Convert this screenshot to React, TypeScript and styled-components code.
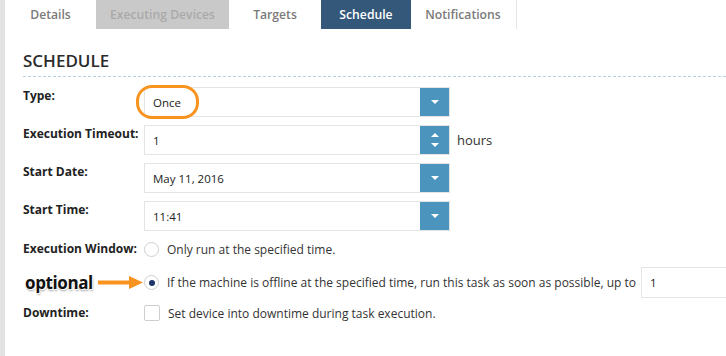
import React from "react";
import styled, { createGlobalStyle } from "styled-components";

const GlobalStyle = createGlobalStyle`
  html, body {
    margin: 0;
    padding: 0;
    background: #ffffff;
  }
  body {
    font-family: "Open Sans", "Liberation Sans", sans-serif;
    color: #333;
  }
`;

const Page = styled.div`
  display: flex;
  width: 726px;
  height: 356px;
  overflow: hidden;
`;

const Edge = styled.div`
  width: 5px;
  flex-shrink: 0;
  background: #e2e2e2;
`;

const Main = styled.div`
  flex: 1;
  min-width: 0;
`;

const TabBar = styled.div`
  display: flex;
  height: 29px;
  margin-left: 7px;
`;

const Tab = styled.div<{ w: number; variant?: "active" | "disabled"; last?: boolean; shift?: number }>`
  display: flex;
  align-items: center;
  justify-content: center;
  width: ${(p) => p.w}px;
  box-sizing: border-box;
  padding-right: ${(p) => p.shift ?? 0}px;
  margin-right: 1px;
  font-size: 12.2px;
  font-weight: 600;
  color: ${(p) =>
    p.variant === "active" ? "#fff" : p.variant === "disabled" ? "#a9a9a9" : "#7a7a7a"};
  background: ${(p) =>
    p.variant === "active" ? "#34587a" : p.variant === "disabled" ? "#c9c9c9" : "#fff"};
  border-right: ${(p) => (p.last ? "1px solid #e6e6e6" : "none")};
`;

const Section = styled.div`
  padding: 21px 0 0 18px;
`;

const Heading = styled.h2`
  margin: 0;
  font-size: 17px;
  font-weight: 600;
  color: #2b2b2b;
  line-height: 22px;
  padding-bottom: 4px;
  border-bottom: 1px dashed #b5d2e2;
`;

const Form = styled.div`
  display: grid;
  grid-template-columns: 121px 1fr;
  margin-top: 10px;
`;

const Label = styled.div<{ pad?: number }>`
  font-size: 12px;
  line-height: 16px;
  font-weight: 700;
  color: #222;
  padding-top: ${(p) => p.pad ?? 1}px;
  white-space: nowrap;
`;

const Control = styled.div<{ gap?: number; h?: number }>`
  display: flex;
  align-items: center;
  margin-bottom: ${(p) => p.gap ?? 8}px;
  ${(p) => (p.h ? `height: ${p.h}px;` : "")}
  position: relative;
`;

const Field = styled.div`
  display: flex;
  width: 306px;
  height: 30px;
  box-sizing: border-box;
  border: 1px solid #e4e4e4;
  background: #fff;
`;

const FieldText = styled.div`
  flex: 1;
  display: flex;
  align-items: center;
  padding-left: 8px;
  font-size: 11.5px;
  color: #222;
`;

const Btn = styled.div`
  width: 29px;
  background: #4b94bd;
  display: flex;
  flex-direction: column;
  align-items: center;
  justify-content: center;
  gap: 6px;
`;

const Caret = styled.div<{ up?: boolean }>`
  width: 0;
  height: 0;
  border-left: 4px solid transparent;
  border-right: 4px solid transparent;
  ${(p) => (p.up ? "border-bottom: 4px solid #fff;" : "border-top: 4px solid #fff;")}
`;

const Unit = styled.span`
  margin-left: 7px;
  font-size: 13px;
  color: #333;
`;

const Highlight = styled.div`
  position: absolute;
  left: -8px;
  top: -2px;
  width: 57px;
  height: 28px;
  border: 3px solid #f7931e;
  border-radius: 16px;
  pointer-events: none;
`;

const Radio = styled.div<{ checked?: boolean }>`
  width: 15px;
  height: 15px;
  box-sizing: border-box;
  border: 1px solid #cfcfcf;
  border-radius: 50%;
  display: flex;
  align-items: center;
  justify-content: center;
  flex-shrink: 0;
  &::after {
    content: "";
    display: ${(p) => (p.checked ? "block" : "none")};
    width: 6px;
    height: 6px;
    border-radius: 50%;
    background: #1d3467;
  }
`;

const Box = styled.div`
  width: 16px;
  height: 16px;
  box-sizing: border-box;
  border: 1px solid #cfcfcf;
  border-radius: 2px;
  flex-shrink: 0;
`;

const OptText = styled.span`
  margin-left: 8px;
  font-size: 12px;
  color: #333;
  white-space: nowrap;
`;

const SmallInput = styled.div`
  margin-left: 5px;
  width: 120px;
  height: 31px;
  box-sizing: border-box;
  border: 1px solid #e4e4e4;
  display: flex;
  align-items: center;
  padding-left: 8px;
  font-size: 11.5px;
  color: #222;
`;

const Annotation = styled.div`
  display: flex;
  align-items: center;
  height: 31px;
  padding-left: 2px;
`;

const Optional = styled.span`
  font-size: 17px;
  font-weight: 700;
  color: #111;
  letter-spacing: -0.4px;
  text-shadow: 1px 1px 0 #fff, -1px -1px 0 #fff, 1px 2px 2px rgba(0, 0, 0, 0.35);
`;

function Arrow() {
  return (
    <svg width="46" height="15" viewBox="0 0 46 15" style={{ marginLeft: 5 }}>
      <path d="M0 5.5 H31 V1 L45 7.5 L31 14 V9.5 H0 Z" fill="#f7931e" />
    </svg>
  );
}

function Select({ value, spin }: { value: string; spin?: boolean }) {
  return (
    <Field>
      <FieldText>{value}</FieldText>
      <Btn>
        {spin && <Caret up />}
        <Caret />
      </Btn>
    </Field>
  );
}

function App() {
  return (
    <>
      <GlobalStyle />
      <Page>
        <Edge />
        <Main>
          <TabBar>
            <Tab w={83} shift={6}>
              Details
            </Tab>
            <Tab w={133} variant="disabled">
              Executing Devices
            </Tab>
            <Tab w={90}>Targets</Tab>
            <Tab w={90} variant="active">
              Schedule
            </Tab>
            <Tab w={105} shift={2} last>
              Notifications
            </Tab>
          </TabBar>
          <Section>
            <Heading>SCHEDULE</Heading>
            <Form>
              <Label>Type:</Label>
              <Control>
                <Select value="Once" />
                <Highlight />
              </Control>

              <Label>Execution Timeout:</Label>
              <Control>
                <Select value="1" spin />
                <Unit>hours</Unit>
              </Control>

              <Label>Start Date:</Label>
              <Control>
                <Select value="May 11, 2016" />
              </Control>

              <Label>Start Time:</Label>
              <Control>
                <Select value="11:41" />
              </Control>

              <Label pad={2}>Execution Window:</Label>
              <Control h={20}>
                <Radio />
                <OptText>Only run at the specified time.</OptText>
              </Control>

              <Label pad={0}>
                <Annotation>
                  <Optional>optional</Optional>
                  <Arrow />
                </Annotation>
              </Label>
              <Control gap={7}>
                <Radio checked />
                <OptText>
                  If the machine is offline at the specified time, run this task as soon as possible, up to
                </OptText>
                <SmallInput>1</SmallInput>
              </Control>

              <Label pad={0}>Downtime:</Label>
              <Control h={16}>
                <Box />
                <OptText>Set device into downtime during task execution.</OptText>
              </Control>
            </Form>
          </Section>
        </Main>
      </Page>
    </>
  );
}

export default App;
